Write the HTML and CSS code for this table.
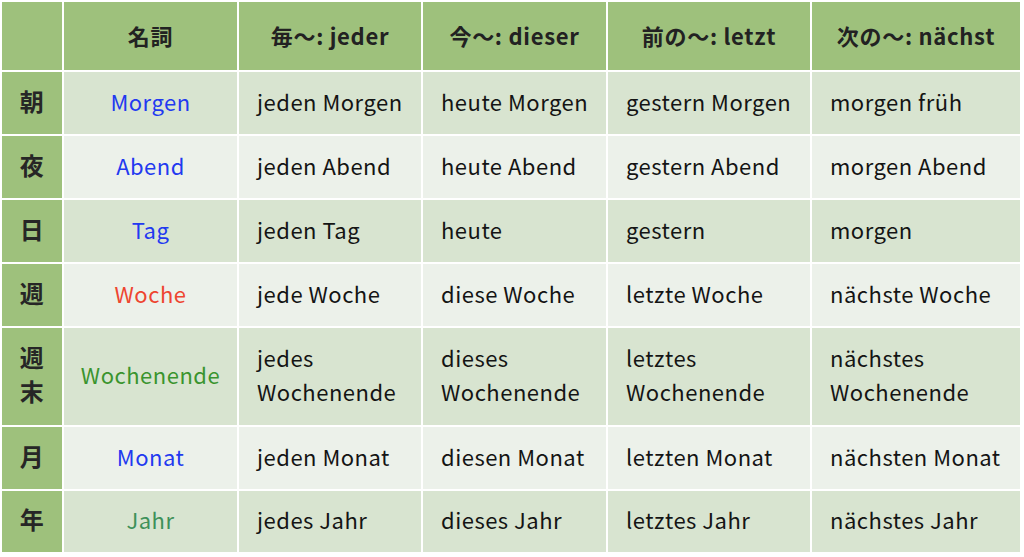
FILE: index.html
```html
<!DOCTYPE html>
<html lang="ja">
<head>
<meta charset="utf-8">
<title>Zeitangaben</title>
<link rel="stylesheet" href="styles.css">
</head>
<body>
<table class="vocab">
  <colgroup>
    <col class="c1"><col class="c2"><col class="c3"><col class="c4"><col class="c5"><col class="c6">
  </colgroup>
  <thead>
    <tr class="head">
      <th></th>
      <th>名詞</th>
      <th>毎～: jeder</th>
      <th>今～: dieser</th>
      <th>前の～: letzt</th>
      <th>次の～: nächst</th>
    </tr>
  </thead>
  <tbody>
    <tr class="odd">
      <th class="kanji">朝</th>
      <td class="noun blue">Morgen</td>
      <td>jeden Morgen</td>
      <td>heute Morgen</td>
      <td>gestern Morgen</td>
      <td>morgen früh</td>
    </tr>
    <tr class="even">
      <th class="kanji">夜</th>
      <td class="noun blue">Abend</td>
      <td>jeden Abend</td>
      <td>heute Abend</td>
      <td>gestern Abend</td>
      <td>morgen Abend</td>
    </tr>
    <tr class="odd">
      <th class="kanji">日</th>
      <td class="noun blue">Tag</td>
      <td>jeden Tag</td>
      <td>heute</td>
      <td>gestern</td>
      <td>morgen</td>
    </tr>
    <tr class="even">
      <th class="kanji">週</th>
      <td class="noun red">Woche</td>
      <td>jede Woche</td>
      <td>diese Woche</td>
      <td>letzte Woche</td>
      <td>nächste Woche</td>
    </tr>
    <tr class="odd tall">
      <th class="kanji">週<br>末</th>
      <td class="noun green">Wochenende</td>
      <td>jedes<br>Wochenende</td>
      <td>dieses<br>Wochenende</td>
      <td>letztes<br>Wochenende</td>
      <td>nächstes<br>Wochenende</td>
    </tr>
    <tr class="even">
      <th class="kanji">月</th>
      <td class="noun blue">Monat</td>
      <td>jeden Monat</td>
      <td>diesen Monat</td>
      <td>letzten Monat</td>
      <td>nächsten Monat</td>
    </tr>
    <tr class="odd last">
      <th class="kanji">年</th>
      <td class="noun teal">Jahr</td>
      <td>jedes Jahr</td>
      <td>dieses Jahr</td>
      <td>letztes Jahr</td>
      <td>nächstes Jahr</td>
    </tr>
  </tbody>
</table>
</body>
</html>
```

FILE: styles.css
```css
html, body {
  margin: 0;
  padding: 0;
  background: #ffffff;
}

.vocab {
  border-collapse: separate;
  border-spacing: 2px;
  table-layout: fixed;
  width: 1022px;
  font-family: "Noto Sans CJK JP", "Noto Sans", sans-serif;
  font-size: 22px;
  letter-spacing: 0.5px;
  color: #141414;
}

.c1 { width: 60px; }
.c2 { width: 173px; }
.c3 { width: 182px; }
.c4 { width: 183px; }
.c5 { width: 202px; }
.c6 { width: 208px; }

.vocab th,
.vocab td {
  padding: 0 0 5px 18px;
  vertical-align: middle;
  line-height: 34px;
  white-space: nowrap;
}

.head th {
  height: 66px;
  background: #9ec17c;
  text-align: center;
  font-weight: 700;
  padding: 0 0 2px 0;
  color: #222222;
  letter-spacing: 0.7px;
}

.vocab tbody tr {
  height: 62px;
}

.vocab tbody tr.tall {
  height: 97px;
}

.vocab tbody tr.last {
  height: 61px;
}

.vocab .kanji {
  background: #9ec17c;
  text-align: center;
  font-weight: 700;
  font-size: 24px;
  padding: 0 0 5px 0;
  color: #262626;
}

.odd td { background: #d8e4d0; }
.even td { background: #ecf1ea; }

.vocab td.noun {
  text-align: center;
  padding: 0 0 5px 0;
}

.blue { color: #2239f0; }
.red { color: #ee4530; }
.green { color: #3a942e; }
.teal { color: #3e915a; }
```
